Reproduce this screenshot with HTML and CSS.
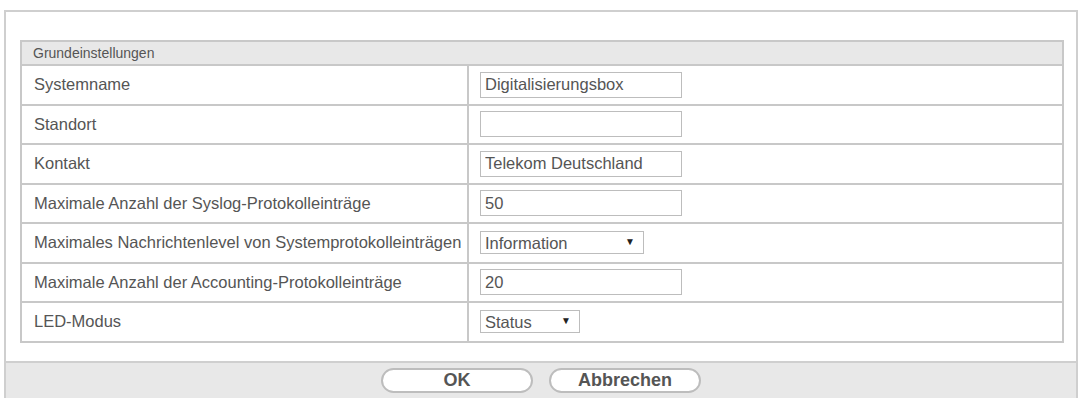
FILE: index.html
```html
<!DOCTYPE html>
<html lang="de">
<head>
  <meta charset="UTF-8">
  <title>Grundeinstellungen</title>
  <link rel="stylesheet" href="styles.css">
</head>
<body>

<div class="panel">
  <div class="panel-body">
    <table class="settings">
      <tr class="settings-head">
        <td colspan="2">Grundeinstellungen</td>
      </tr>
      <tr>
        <td class="label">Systemname</td>
        <td><input type="text" class="field" value="Digitalisierungsbox"></td>
      </tr>
      <tr>
        <td class="label">Standort</td>
        <td><input type="text" class="field" value=""></td>
      </tr>
      <tr>
        <td class="label">Kontakt</td>
        <td><input type="text" class="field" value="Telekom Deutschland"></td>
      </tr>
      <tr>
        <td class="label">Maximale Anzahl der Syslog-Protokolleinträge</td>
        <td><input type="text" class="field" value="50"></td>
      </tr>
      <tr>
        <td class="label">Maximales Nachrichtenlevel von Systemprotokolleinträgen</td>
        <td>
          <span class="select-wrap wide">
            <select>
              <option>Information</option>
              <option>Debug</option>
              <option>Warnung</option>
            </select>
          </span>
        </td>
      </tr>
      <tr>
        <td class="label">Maximale Anzahl der Accounting-Protokolleinträge</td>
        <td><input type="text" class="field" value="20"></td>
      </tr>
      <tr>
        <td class="label">LED-Modus</td>
        <td>
          <span class="select-wrap narrow">
            <select>
              <option>Status</option>
              <option>Aus</option>
            </select>
          </span>
        </td>
      </tr>
    </table>
  </div>

  <div class="panel-footer">
    <button class="btn">OK</button>
    <button class="btn">Abbrechen</button>
  </div>
</div>

</body>
</html>
```

FILE: styles.css
```css
body {
  margin: 0;
  padding: 10px 0 0 4px;
  background: #fff;
  font-family: "Liberation Sans", Arial, sans-serif;
  color: #555;
}

.panel {
  width: 1070px;
  height: 388px;
  border: 2px solid #cfcfcf;
  border-bottom: none;
  display: flex;
  flex-direction: column;
}

.panel-body {
  padding: 28px 12px 0 14px;
}

.settings {
  width: 100%;
  border-collapse: collapse;
  border: 2px solid #c8c8c8;
}

.settings td {
  border: 2px solid #c8c8c8;
  height: 37.5px;
  padding: 0 0 0 11px;
  font-size: 16.5px;
}

.settings td.label {
  width: 433px;
  padding-left: 12px;
}

.settings-head td {
  height: 22px;
  background: #e8e8e8;
  font-size: 14px;
  color: #555;
}

.field {
  width: 202px;
  height: 26px;
  box-sizing: border-box;
  border: 1px solid #bdbdbd;
  padding: 0 4px;
  font-family: "Liberation Sans", Arial, sans-serif;
  font-size: 16.5px;
  color: #555;
  outline: none;
}

.select-wrap {
  position: relative;
  display: inline-block;
  vertical-align: middle;
}

.select-wrap select {
  appearance: none;
  -webkit-appearance: none;
  height: 23px;
  box-sizing: border-box;
  border: 1px solid #bdbdbd;
  background: #fff;
  padding: 0 4px;
  font-family: "Liberation Sans", Arial, sans-serif;
  font-size: 16.5px;
  color: #555;
  border-radius: 0;
}

.select-wrap::after {
  content: "\25BC";
  position: absolute;
  right: 9px;
  top: 5px;
  font-size: 10px;
  color: #222;
  pointer-events: none;
}

.select-wrap.wide select {
  width: 164px;
}

.select-wrap.narrow select {
  width: 100px;
}

.panel-footer {
  flex: 1;
  margin-top: 18px;
  background: #e8e8e8;
  border-top: 2px solid #cfcfcf;
  display: flex;
  justify-content: center;
  align-items: flex-start;
  gap: 16px;
  padding-top: 5px;
}

.btn {
  width: 152px;
  height: 25px;
  background: #fff;
  border: 2px solid #bdbdbd;
  border-radius: 13px;
  font-family: "Liberation Sans", Arial, sans-serif;
  font-size: 18px;
  font-weight: bold;
  color: #555;
  line-height: 19px;
  padding: 0;
  cursor: pointer;
}
```
